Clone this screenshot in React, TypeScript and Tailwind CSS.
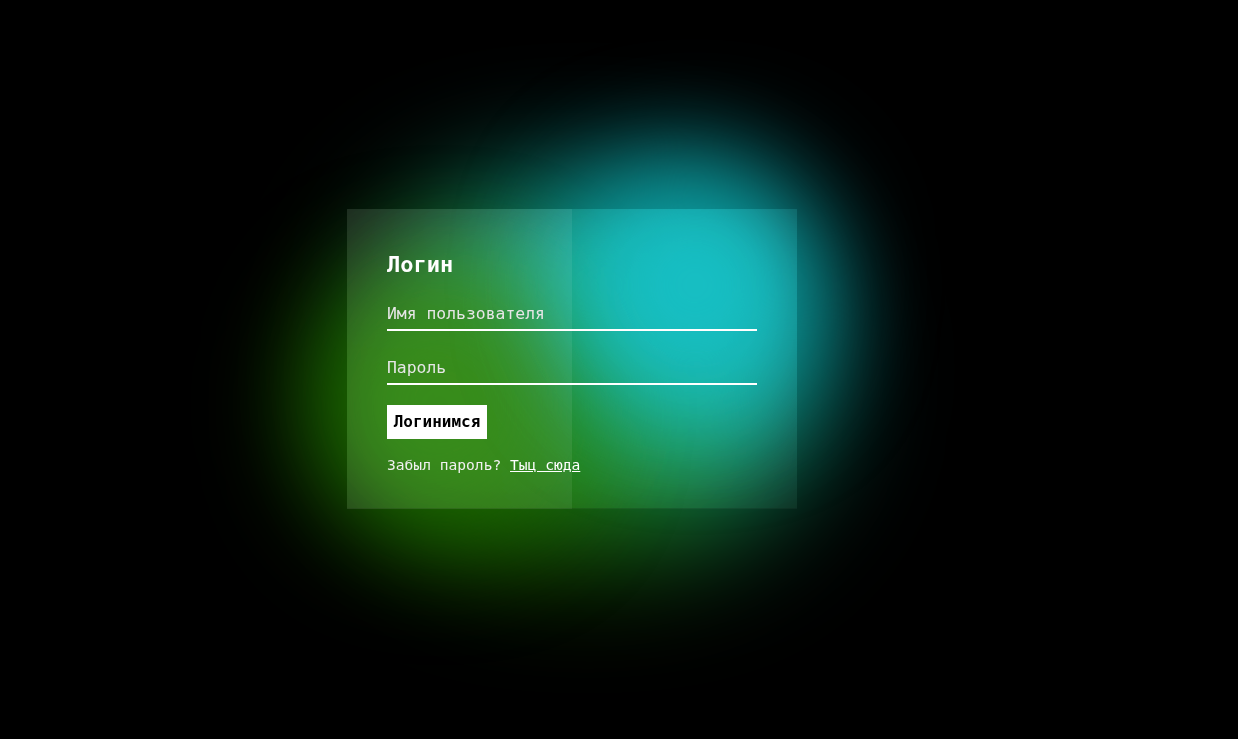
import { useState } from "react"

const mono = "font-['DejaVu_Sans_Mono',monospace]"

const App = () => {
    const [login, setLogin] = useState("")
    const [pass, setPass] = useState("")

    return (
        <div className={`relative min-h-screen w-full overflow-hidden bg-black ${mono}`}>
            {/* glow */}
            <div className="absolute left-[350px] top-[180px] h-[380px] w-[470px] rounded-full bg-[linear-gradient(40deg,#1a6600_30%,#0b9a9e_74%)] blur-[60px]" />
            <div className="absolute left-[310px] top-[270px] h-[270px] w-[260px] rounded-full bg-[#1c6a00] blur-[55px]" />
            <div className="absolute left-[570px] top-[160px] h-[250px] w-[250px] rounded-full bg-[#0c9ea2] blur-[55px]" />

            <div className="relative flex min-h-screen items-center justify-center pb-[21px] pr-[94px]">
                <div className="grid h-[300px] w-[450px] grid-cols-2 bg-white/[0.04] backdrop-brightness-[1.2]">
                    <div className="col-start-1 row-start-1 bg-white/[0.07]" />
                    <form
                        className="col-span-2 col-start-1 row-start-1 flex flex-col px-10 pt-[42px]"
                        onSubmit={(e) => e.preventDefault()}
                    >
                        <h2 className="text-[22px] font-bold leading-7 text-white">Логин</h2>
                        <input
                            type="text"
                            value={login}
                            onChange={(e) => setLogin(e.target.value)}
                            placeholder="Имя пользователя"
                            className="mt-[23px] w-full border-b-2 border-white bg-transparent pb-[3px] text-[16.4px] leading-6 text-white outline-none placeholder:text-[#e6e6e6]"
                        />
                        <input
                            type="password"
                            value={pass}
                            onChange={(e) => setPass(e.target.value)}
                            placeholder="Пароль"
                            className="mt-[25px] w-full border-b-2 border-white bg-transparent pb-[3px] text-[16.4px] leading-6 text-white outline-none placeholder:text-[#e6e6e6]"
                        />
                        <button
                            type="submit"
                            className="mt-[20px] h-[34px] w-[100px] bg-white text-[16px] font-bold text-black"
                        >
                            Логинимся
                        </button>
                        <p className="mt-[16px] text-[14.6px] leading-5 text-[#f0f0f0]">
                            Забыл пароль? <a href="#" className="text-white underline">Тыц сюда</a>
                        </p>
                    </form>
                </div>
            </div>
        </div>
    )
}

export default App
